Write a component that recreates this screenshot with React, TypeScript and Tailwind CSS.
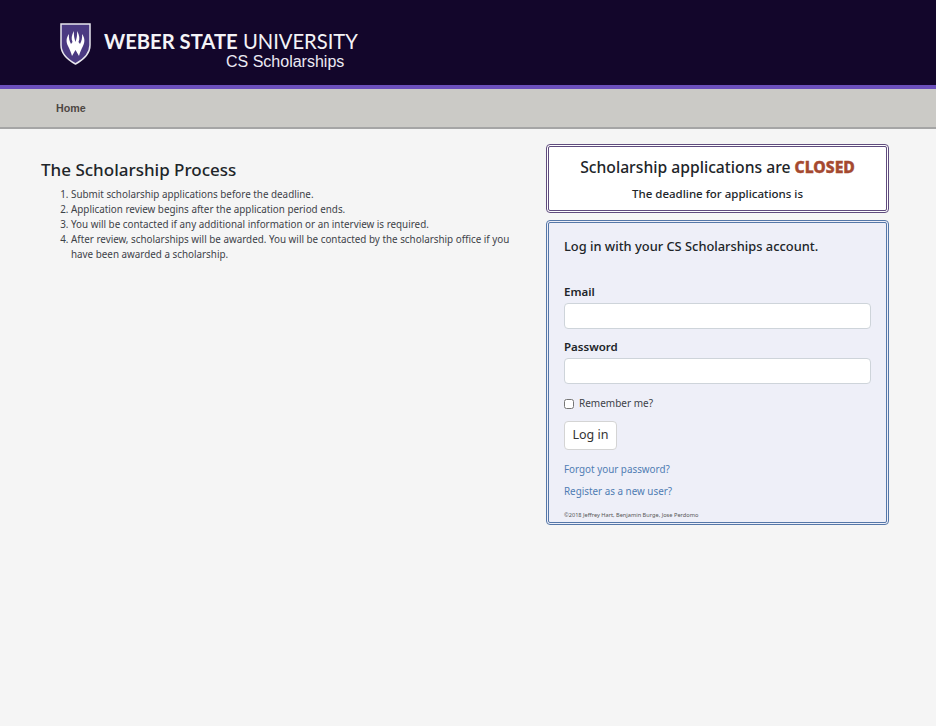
const bodyFont = "font-['Noto_Sans','Open_Sans',sans-serif]"

function Shield() {
  return (
    <svg width="31" height="42" viewBox="0 0 31 42" className="shrink-0">
      <path d="M1 1H30V22C30 31 23 37 15.500 41C8 37 1 31 1 22Z" fill="#4b3a82" stroke="#e8e6ee" strokeWidth="1.500" />
      <path
        d="M9 11C6 15 6 19 8 23C9.500 26 11 29 12 33L15.500 27L19 33C20 29 21.500 26 23 23C25 19 25 15 22 11C22.500 15 21.500 18 20 21L18.500 19C20 16 19.500 12 17 8C17.500 12 16.500 16 15.500 19C14.500 16 13.500 12 14 8C11.500 12 11 16 12.500 19L11 21C9.500 18 8.500 15 9 11Z"
        fill="#ffffff"
      />
    </svg>
  )
}

function Field({ label }: { label: string }) {
  return (
    <div className="mb-[10px]">
      <label className="mb-[3px] block text-[11.500px] leading-[16px] font-semibold text-[#212529]">{label}</label>
      <input className="block h-[26px] w-full rounded-[4px] border border-[#ced4da] bg-white" />
    </div>
  )
}

export default function App() {
  return (
    <div className={`min-h-[726px] bg-[#f5f5f5] ${bodyFont}`}>
      <header className="h-[89px] border-b-4 border-[#6b4fbb] bg-[#13062b]">
        <div className="flex items-start pt-[23px] pl-[60px]">
          <Shield />
          <div className="ml-[13px]">
            <div className="mt-[6px] font-['Lato',sans-serif] text-[20.200px] leading-[24px] whitespace-nowrap text-[#f4f3f7]">
              <span className="font-bold">WEBER STATE</span> <span className="font-normal">UNIVERSITY</span>
            </div>
            <div className="ml-[122px] font-['Liberation_Sans',sans-serif] text-[16px] leading-[17px] whitespace-nowrap text-[#eceaf4]">
              CS Scholarships
            </div>
          </div>
        </div>
      </header>

      <nav className="flex h-[40px] items-center border-b-2 border-[#a5a5a5] bg-[#cbcac6] pt-px pl-[56px]">
        <a className="font-['Liberation_Sans',sans-serif] text-[10.700px] font-bold text-[#4d4743]">Home</a>
      </nav>

      <main className="flex justify-between pt-[15px] pr-[47px] pl-[41px]">
        <section className="w-[476px] pt-[14px]">
          <h2 className="text-[17px] leading-[24px] font-medium text-[#212529]">The Scholarship Process</h2>
          <ol className="mt-[5px] list-decimal pl-[30px] text-[9.850px] leading-[15px] text-[#3d4248]">
            <li>Submit scholarship applications before the deadline.</li>
            <li>Application review begins after the application period ends.</li>
            <li>You will be contacted if any additional information or an interview is required.</li>
            <li>After review, scholarships will be awarded. You will be contacted by the scholarship office if you have been awarded a scholarship.</li>
          </ol>
        </section>

        <aside className="flex w-[343px] flex-col gap-[7px]">
          <div className="h-[69px] rounded-[4px] border-[3px] border-double border-[#5f4b7d] bg-white pt-[8px] text-center">
            <div className="text-[15.700px] leading-[24px] font-medium text-[#212529]">
              Scholarship applications are{' '}
              <span className="font-extrabold text-[#a5492f] [-webkit-text-stroke:0.4px_#a5492f]">CLOSED</span>
            </div>
            <div className="mt-[6px] text-[11.500px] leading-[18px] font-medium text-[#212529]">The deadline for applications is</div>
          </div>

          <div className="h-[305px] rounded-[4px] border-[3px] border-double border-[#5577a8] bg-[#eeeff8] px-[15px] pt-[13px]">
            <h4 className="mb-[28px] text-[12.850px] leading-[20px] font-medium text-[#212529]">Log in with your CS Scholarships account.</h4>
            <Field label="Email" />
            <Field label="Password" />
            <label className="mt-[12px] flex items-center gap-[5px] text-[10px] leading-[15px] text-[#3d4248]">
              <input type="checkbox" className="m-0 h-[10px] w-[10px]" />
              Remember me?
            </label>
            <button className="mt-[10px] block h-[29px] w-[53px] rounded-[4px] border border-[#d4d4d4] bg-white text-[12.500px] text-[#333]">Log in</button>
            <a className="mt-[12px] block text-[9.850px] leading-[15px] text-[#4f7cb3]">Forgot your password?</a>
            <a className="mt-[7px] block text-[9.850px] leading-[15px] text-[#4f7cb3]">Register as a new user?</a>
            <p className="mt-[12px] text-[5.650px] leading-[8px] text-[#555]">©2018 Jeffrey Hart, Benjamin Burge, Jose Perdomo</p>
          </div>
        </aside>
      </main>
    </div>
  )
}
